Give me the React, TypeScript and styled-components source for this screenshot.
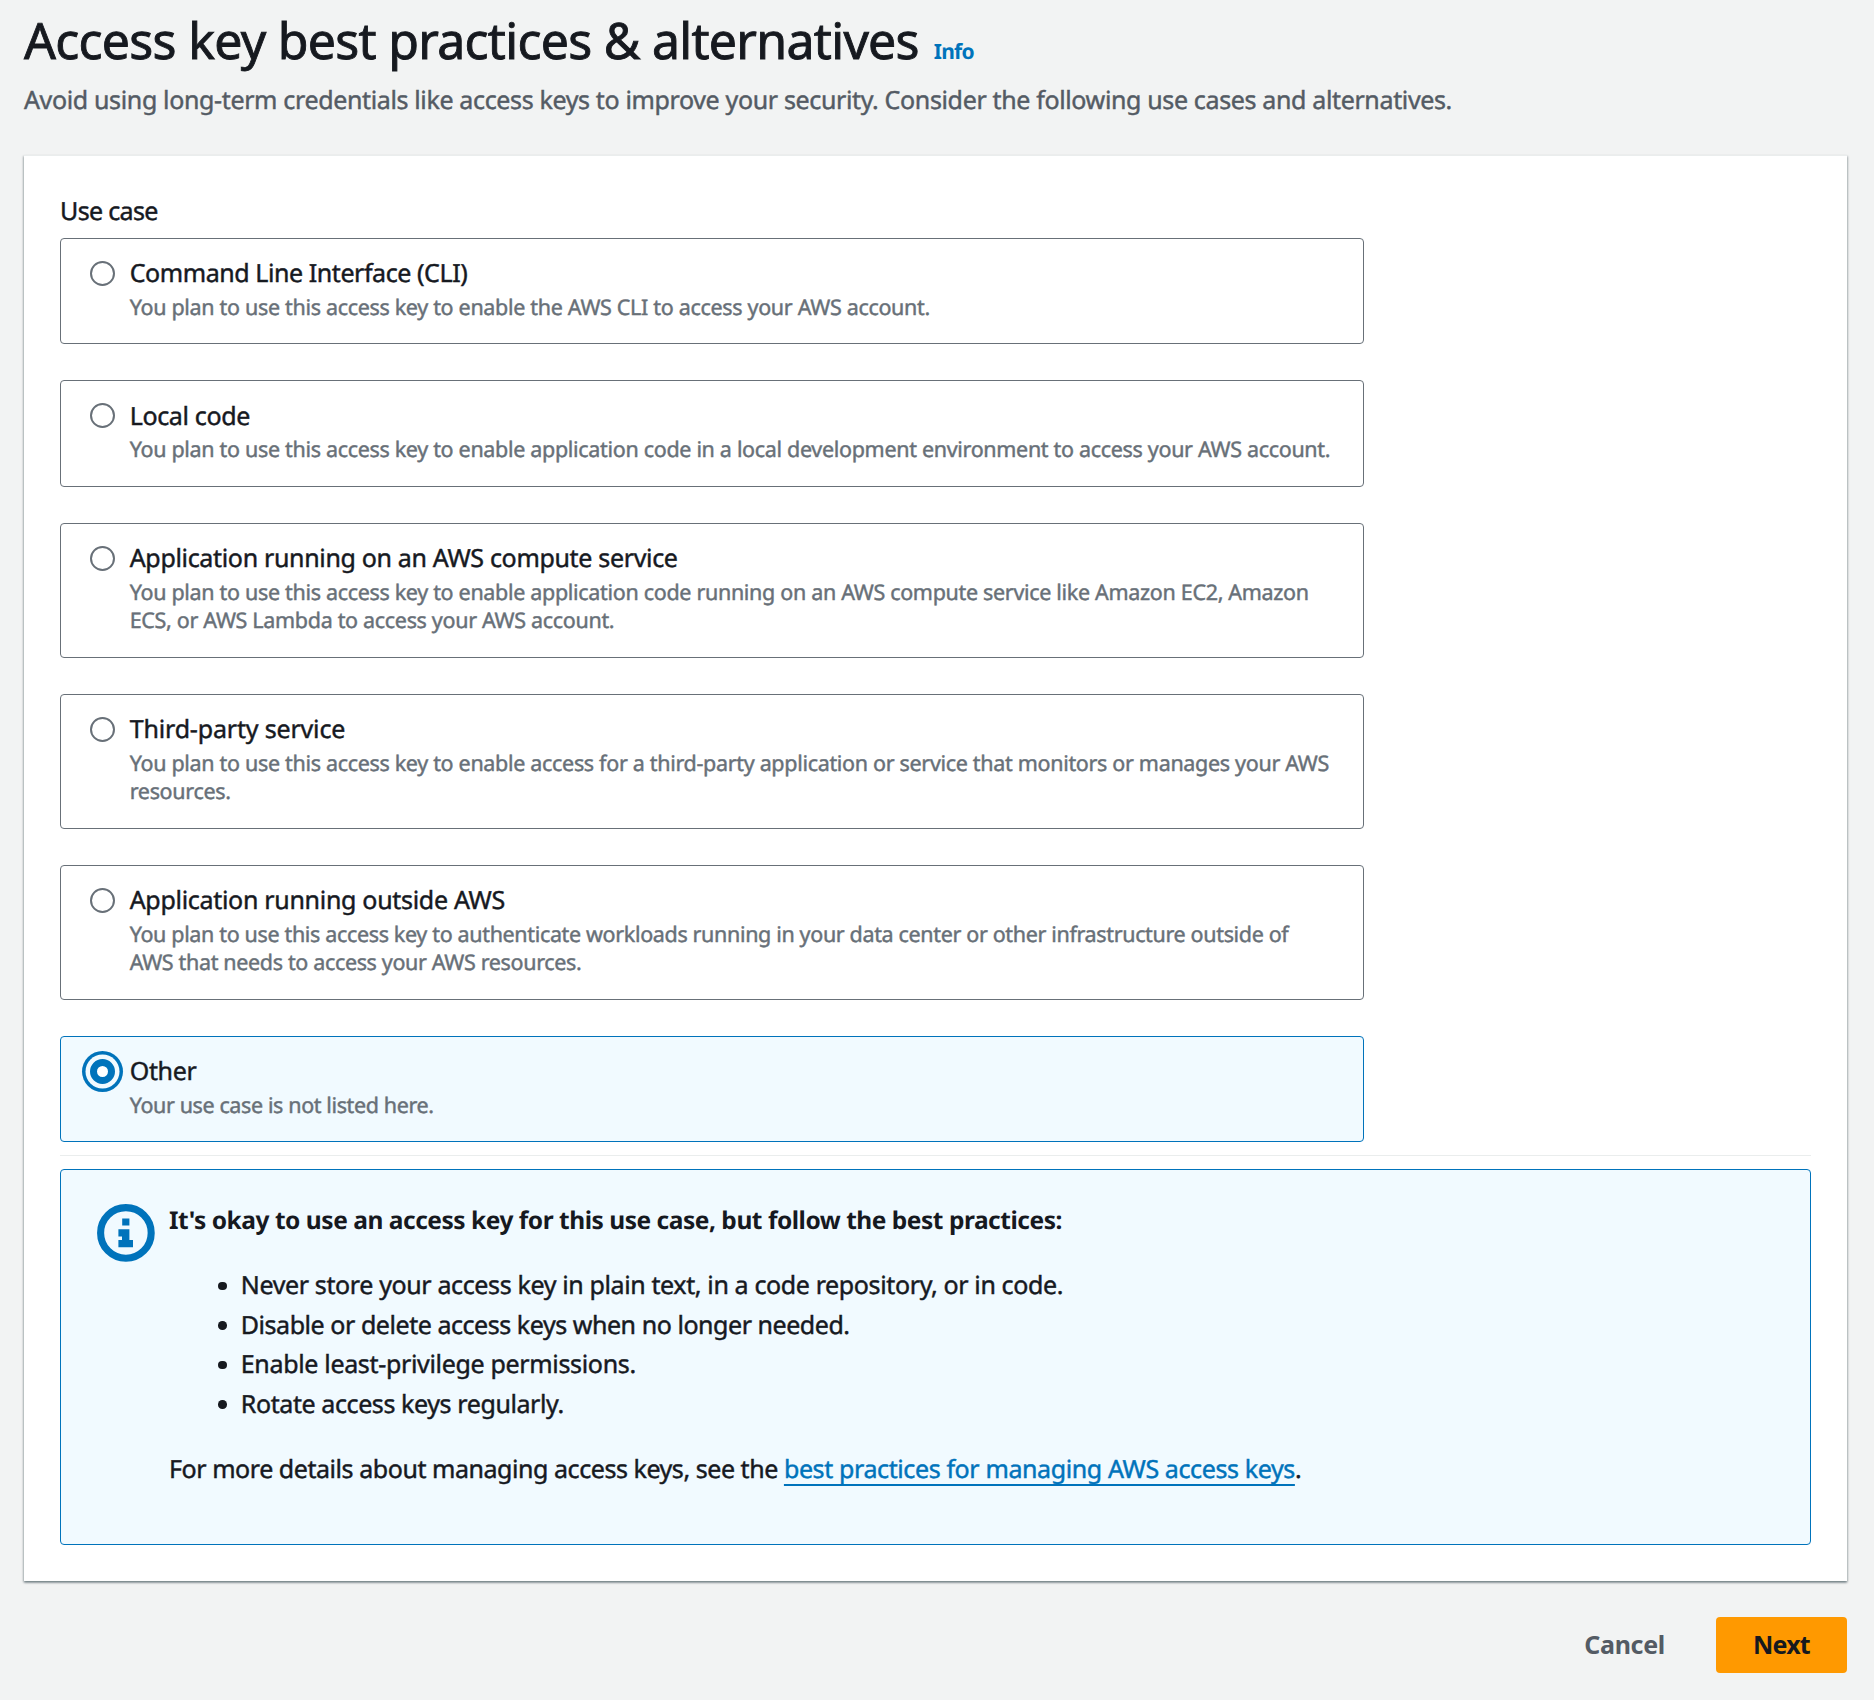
import React, { useState } from 'react';
import styled, { createGlobalStyle, css } from 'styled-components';

const color = {
  page: '#f2f3f3',
  text: '#16191f',
  secondary: '#545b64',
  muted: '#687078',
  blue: '#0073bb',
  tint: '#f1faff',
  orange: '#ff9900',
  line: '#eaeded',
};

const GlobalStyle = createGlobalStyle`
  *, *::before, *::after { box-sizing: border-box; }
  body {
    margin: 0;
    background: ${color.page};
    color: ${color.text};
    font-family: 'Noto Sans', 'Open Sans', sans-serif;
    font-size: 25px;
    line-height: 36px;
    letter-spacing: -0.38px;
    -webkit-text-stroke: 0.45px currentColor;
    text-rendering: geometricPrecision;
  }
`;

const Page = styled.div`
  min-height: 1700px;
  padding: 10px 27px 27px 24px;
`;

const Header = styled.header`
  display: flex;
  flex-direction: column;
  gap: 12px;
  margin-bottom: 37px;
`;

const TitleRow = styled.div`
  display: flex;
  align-items: baseline;
  gap: 15px;
`;

const Title = styled.h1`
  margin: 0;
  font-size: 50px;
  line-height: 60px;
  font-weight: 400;
  letter-spacing: -0.7px;
  -webkit-text-stroke: 0.9px currentColor;
`;

const InfoLink = styled.a`
  color: ${color.blue};
  font-size: 21px;
  font-weight: 700;
  letter-spacing: -0.8px;
  text-decoration: none;
  -webkit-text-stroke: 0;
`;

const Subtitle = styled.p`
  margin: 0;
  color: ${color.secondary};
  letter-spacing: -0.356px;
`;

const Panel = styled.main`
  padding: 37px 36px 36px;
  background: #fff;
  border-top: 1px solid ${color.line};
  box-shadow:
    0 2px 2px 0 rgba(0, 28, 36, 0.3),
    1px 1px 2px 0 rgba(0, 28, 36, 0.2),
    -1px 1px 2px 0 rgba(0, 28, 36, 0.2);
`;

const FieldLabel = styled.div`
  margin-bottom: 8.9px;
  letter-spacing: -0.65px;
`;

const TileList = styled.div`
  display: flex;
  flex-direction: column;
  gap: 36.15px;
  width: 1304px;
`;

const Tile = styled.label<{ $selected: boolean }>`
  display: flex;
  gap: 14.7px;
  padding: 16.3px 30px 20.9px 29px;
  border: 1px solid ${(p) => (p.$selected ? color.blue : color.muted)};
  border-radius: 4px;
  background: ${(p) => (p.$selected ? color.tint : '#fff')};
  cursor: pointer;
`;

const Radio = styled.input`
  appearance: none;
  flex: none;
  width: 25px;
  height: 25px;
  margin: 5.7px 0 0;
  border: 2px solid ${color.muted};
  border-radius: 50%;
  background: #fff;

  &:checked {
    border: 7px solid ${color.blue};
    box-shadow: 0 0 0 4.5px ${color.tint}, 0 0 0 8px ${color.blue};
  }
`;

const TileText = styled.div`
  display: flex;
  flex-direction: column;
  gap: 2.7px;
`;

const TileTitle = styled.span<{ $tracking?: number }>`
  letter-spacing: ${(p) => p.$tracking ?? -0.33}px;
`;

const TileDescription = styled.span<{ $tracking?: number }>`
  color: ${color.muted};
  font-size: 21.5px;
  line-height: 28.5px;
  letter-spacing: ${(p) => p.$tracking ?? -0.316}px;
`;

const Divider = styled.hr`
  height: 1px;
  margin: 12.5px 0 13px;
  border: 0;
  background: ${color.line};
`;

const Alert = styled.section`
  display: flex;
  gap: 14px;
  height: 376px;
  padding: 33px 36px 0;
  border: 1px solid ${color.blue};
  border-radius: 4px;
  background: ${color.tint};
`;

const AlertIcon = styled.svg`
  flex: none;
  width: 58px;
  height: 58px;
  margin-top: 1px;
`;

const AlertTitle = styled.h2`
  margin: 0;
  font-size: 24.5px;
  line-height: 36px;
  font-weight: 700;
  letter-spacing: -0.47px;
  -webkit-text-stroke: 0;
`;

const Practices = styled.ul`
  margin: 27.2px 0 26.2px;
  padding: 0 0 0 49px;
  list-style: none;
`;

const Practice = styled.li<{ $tracking?: number }>`
  display: flex;
  align-items: center;
  gap: 14.3px;
  line-height: 39.6px;
  letter-spacing: ${(p) => p.$tracking ?? -0.37}px;

  &::before {
    content: '';
    width: 8.5px;
    height: 8.5px;
    border-radius: 50%;
    background: ${color.text};
  }
`;

const AlertFooter = styled.p`
  margin: 0;
  letter-spacing: -0.445px;
`;

const TextLink = styled.a`
  color: ${color.blue};
  text-decoration: underline;
  text-decoration-thickness: 2px;
  text-underline-offset: 6px;
  text-decoration-skip-ink: none;
  letter-spacing: -0.385px;
`;

const Actions = styled.footer`
  display: flex;
  justify-content: flex-end;
  gap: 15px;
  margin-top: 36px;
`;

const Button = styled.button<{ $primary?: boolean }>`
  height: 56px;
  padding: 0 36px 2px;
  border: 0;
  border-radius: 4px;
  background: transparent;
  color: ${color.secondary};
  font: inherit;
  font-weight: 700;
  letter-spacing: -0.3px;
  -webkit-text-stroke: 0;
  cursor: pointer;

  ${(p) =>
    p.$primary &&
    css`
      width: 131px;
      background: ${color.orange};
      color: ${color.text};
      letter-spacing: -0.8px;
    `}
`;

type UseCase = {
  id: string;
  title: string;
  description: string;
  titleTracking?: number;
  descriptionTracking?: number;
};

const useCases: UseCase[] = [
  {
    id: 'cli',
    title: 'Command Line Interface (CLI)',
    titleTracking: -0.43,
    description: 'You plan to use this access key to enable the AWS CLI to access your AWS account.',
  },
  {
    id: 'local',
    title: 'Local code',
    titleTracking: -0.35,
    description:
      'You plan to use this access key to enable application code in a local development environment to access your AWS account.',
  },
  {
    id: 'compute',
    title: 'Application running on an AWS compute service',
    description:
      'You plan to use this access key to enable application code running on an AWS compute service like Amazon EC2, Amazon ECS, or AWS Lambda to access your AWS account.',
  },
  {
    id: 'third-party',
    title: 'Third-party service',
    titleTracking: -0.17,
    description:
      'You plan to use this access key to enable access for a third-party application or service that monitors or manages your AWS resources.',
  },
  {
    id: 'outside',
    title: 'Application running outside AWS',
    titleTracking: -0.3,
    description:
      'You plan to use this access key to authenticate workloads running in your data center or other infrastructure outside of AWS that needs to access your AWS resources.',
    descriptionTracking: -0.345,
  },
  {
    id: 'other',
    title: 'Other',
    description: 'Your use case is not listed here.',
    descriptionTracking: -0.38,
  },
];

const practices = [
  { text: 'Never store your access key in plain text, in a code repository, or in code.' },
  { text: 'Disable or delete access keys when no longer needed.', tracking: -0.45 },
  { text: 'Enable least-privilege permissions.', tracking: -0.33 },
  { text: 'Rotate access keys regularly.', tracking: -0.4 },
];

export default function App() {
  const [selected, setSelected] = useState('other');

  return (
    <>
      <GlobalStyle />
      <Page>
        <Header>
          <TitleRow>
            <Title>Access key best practices &amp; alternatives</Title>
            <InfoLink>Info</InfoLink>
          </TitleRow>
          <Subtitle>
            Avoid using long-term credentials like access keys to improve your security. Consider the
            following use cases and alternatives.
          </Subtitle>
        </Header>

        <Panel>
          <FieldLabel>Use case</FieldLabel>
          <TileList role="radiogroup">
            {useCases.map((item) => (
              <Tile key={item.id} $selected={item.id === selected}>
                <Radio
                  type="radio"
                  name="use-case"
                  checked={item.id === selected}
                  onChange={() => setSelected(item.id)}
                />
                <TileText>
                  <TileTitle $tracking={item.titleTracking}>{item.title}</TileTitle>
                  <TileDescription $tracking={item.descriptionTracking}>
                    {item.description}
                  </TileDescription>
                </TileText>
              </Tile>
            ))}
          </TileList>

          <Divider />

          <Alert>
            <AlertIcon viewBox="0 0 58 58" aria-hidden="true">
              <circle cx="28.9" cy="28.9" r="25.3" fill="none" stroke={color.blue} strokeWidth="7.1" />
              <path
                d="M25.2 14.5h7.2v7.1h-7.2zM21.4 25.2h11V36H36v7.2H21.4V36H25v-3.6h-3.6z"
                fill={color.blue}
              />
            </AlertIcon>
            <div>
              <AlertTitle>
                It's okay to use an access key for this use case, but follow the best practices:
              </AlertTitle>
              <Practices>
                {practices.map(({ text, tracking }) => (
                  <Practice key={text} $tracking={tracking}>
                    {text}
                  </Practice>
                ))}
              </Practices>
              <AlertFooter>
                For more details about managing access keys, see the{' '}
                <TextLink>best practices for managing AWS access keys</TextLink>.
              </AlertFooter>
            </div>
          </Alert>
        </Panel>

        <Actions>
          <Button>Cancel</Button>
          <Button $primary>Next</Button>
        </Actions>
      </Page>
    </>
  );
}
